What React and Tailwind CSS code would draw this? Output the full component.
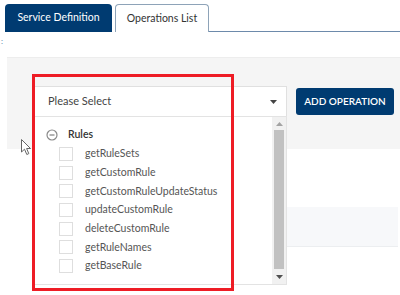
import React from "react";

const items = [
  "getRuleSets",
  "getCustomRule",
  "getCustomRuleUpdateStatus",
  "updateCustomRule",
  "deleteCustomRule",
  "getRuleNames",
  "getBaseRule",
];

export default function App() {
  return (
    <div className="relative w-[400px] h-[295px] bg-white overflow-hidden font-['Lato','Open_Sans',sans-serif]">
      {/* Tabs */}
      <div className="flex items-end pt-[4px] pl-[5px] h-[32px]">
        <div className="w-[107px] h-[28px] bg-[#003b71] rounded-t-[4px] flex items-center justify-center text-white text-[10.5px]">
          Service Definition
        </div>
        <div className="ml-[3px] w-[94px] h-[28px] bg-white border border-b-0 border-[#8ea3b8] rounded-t-[4px] flex items-center justify-center text-[#333] text-[10.5px]">
          Operations List
        </div>
        <div className="flex-1 h-[28px] border-b border-[#6d8aab]"></div>
      </div>
      <div className="h-[25px] pl-[1px] pt-[5px] text-[8px] leading-[8px] text-[#5a7fa8]">:</div>

      {/* Gray panel */}
      <div className="ml-[7px] h-[92px] bg-[#f5f5f5] border-t border-[#ededed] flex items-start">
        <div className="ml-[26px] mt-[28px] w-[254px] h-[31px] bg-white border border-[#e0e0e0] flex items-center pl-[14px] pr-[9px]">
          <span className="flex-1 text-[11px] text-[#444]">Please Select</span>
          <svg width="7" height="4" viewBox="0 0 7 4">
            <path d="M0 0 L7 0 L3.5 4 Z" fill="#444" />
          </svg>
        </div>
        <div className="ml-[9px] mt-[30px] w-[98px] h-[27px] bg-[#003b71] rounded-[3px] flex items-center justify-center text-white text-[10px] font-semibold">
          ADD OPERATION
        </div>
      </div>

      {/* second panel */}
      <div className="mt-[58px] ml-[35px] mr-[2px] h-[40px] bg-[#f7f8fa] border-b border-[#eceef0]"></div>

      {/* Dropdown list (popover) */}
      <div className="absolute left-[33px] top-[116px] w-[254px] h-[169px] bg-white border border-[#e3e3e3] flex">
        <div className="flex-1 pt-[11px] pl-[12px]">
          <div className="flex items-center h-[14px]">
            <svg width="12" height="12" viewBox="0 0 12 12">
              <circle cx="6" cy="6" r="5" fill="none" stroke="#8a8a8a" strokeWidth="1.2" />
              <path d="M3.5 6 H8.5" stroke="#8a8a8a" strokeWidth="1.3" />
            </svg>
            <span className="ml-[10px] text-[10.5px] font-semibold text-[#333]">Rules</span>
          </div>
          <div className="mt-[5px] flex flex-col gap-[4.7px]">
            {items.map((t) => (
              <div key={t} className="flex items-center h-[14px] pl-[13px]">
                <div className="w-[14px] h-[14px] border border-[#dedede] bg-white"></div>
                <span className="ml-[12px] text-[10.5px] text-[#555]">{t}</span>
              </div>
            ))}
          </div>
        </div>
        {/* scrollbar */}
        <div className="w-[14px] h-full bg-[#f1f1f1] flex flex-col items-center">
          <div className="h-[13px] flex items-center justify-center">
            <svg width="7" height="4" viewBox="0 0 7 4">
              <path d="M0 4 L7 4 L3.5 0 Z" fill="#a3a3a3" />
            </svg>
          </div>
          <div className="w-[10px] flex-1 bg-[#c1c1c1]"></div>
          <div className="h-[15px] flex items-center justify-center">
            <svg width="7" height="4" viewBox="0 0 7 4">
              <path d="M0 0 L7 0 L3.5 4 Z" fill="#505050" />
            </svg>
          </div>
        </div>
      </div>

      {/* Red annotation box */}
      <div className="absolute left-[32px] top-[74px] w-[202px] h-[217px] border-[3px] border-[#ee1c25] pointer-events-none"></div>

      {/* cursor */}
      <svg className="absolute left-[21px] top-[139px]" width="12" height="17" viewBox="0 0 12 17">
        <path d="M0.5 0.5 L0.5 13 L3.5 10.2 L5.8 15.5 L7.8 14.6 L5.6 9.5 L9.5 9.5 Z" fill="#fff" stroke="#666" strokeWidth="1" strokeLinejoin="round" />
      </svg>
    </div>
  );
}
